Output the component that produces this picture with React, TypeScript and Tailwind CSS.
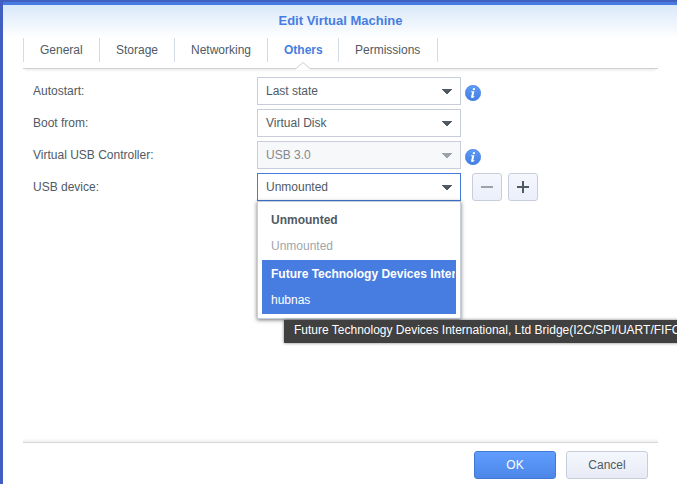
import React from "react";

const tabs = [
  { label: "General", width: "w-[76px]" },
  { label: "Storage", width: "w-[75px]" },
  { label: "Networking", width: "w-[93px]" },
  { label: "Others", width: "w-[71px]", active: true },
  { label: "Permissions", width: "w-[99px]" },
];

function InfoIcon() {
  return (
    <svg className="ml-1 mt-1 size-4 shrink-0" viewBox="0 0 16 16">
      <defs>
        <linearGradient id="info" x1="0" y1="0" x2="0" y2="1">
          <stop offset="0" stopColor="#5e9bf8" />
          <stop offset="1" stopColor="#437edf" />
        </linearGradient>
      </defs>
      <circle cx="8" cy="8" r="7.7" fill="url(#info)" stroke="#3f7bdb" strokeWidth="0.6" />
      <circle cx="8.9" cy="4.2" r="1.15" fill="#fff" />
      <path d="M6.2 6.3H9.4L8.2 11.4L9.5 11.1L9.3 12Q8.3 12.9 6.9 12.9Q5.8 12.8 6.1 11.4L7.2 7.2H6Z" fill="#fff" />
    </svg>
  );
}

function Select({ value, disabled, focused }: { value: string; disabled?: boolean; focused?: boolean }) {
  const tone = focused
    ? "border-[#457bde] bg-white text-[#505a64]"
    : disabled
      ? "border-[#c8cddb] bg-[#f7f8fa] text-[#83888e]"
      : "border-[#c8cddb] bg-white text-[#505a64]";
  return (
    <div className={"flex h-7 w-[204px] shrink-0 items-center justify-between border pl-2 pr-2 " + tone}>
      <span className="leading-[14px]">{value}</span>
      <svg className="h-[5px] w-[10px]" viewBox="0 0 10 5" shapeRendering="crispEdges">
        <path d="M0 0H10V1H9V2H8V3H7V4H6V5H4V4H3V3H2V2H1V1H0Z" fill={disabled ? "#9ca2ab" : "#505a64"} />
      </svg>
    </div>
  );
}

function Row({ label, children }: { label: string; children: React.ReactNode }) {
  return (
    <div className="flex h-7 items-center">
      <div className="w-[224px] shrink-0">{label}</div>
      {children}
    </div>
  );
}

function SquareButton({ plus }: { plus?: boolean }) {
  return (
    <button className="flex h-7 w-[30px] items-center justify-center rounded-[3px] border border-[#c8cddb] bg-linear-to-b from-[#f5f7fd] to-[#ebeffa]">
      <svg className="size-3" viewBox="0 0 12 12" shapeRendering="crispEdges">
        <path d={plus ? "M0 5H12V7H0ZM5 0H7V12H5Z" : "M0 5H12V7H0Z"} fill={plus ? "#505a64" : "#9ca2ab"} />
      </svg>
    </button>
  );
}

function DeviceMenu() {
  return (
    <div className="absolute left-0 top-full z-20 h-[118px] w-[204px] border border-[#c8cddb] bg-white p-1 shadow-[0_1px_4px_rgba(0,0,0,0.55)]">
      <div className="h-[54px] overflow-hidden whitespace-nowrap pl-[9px]">
        <div className="h-7 font-bold leading-7">Unmounted</div>
        <div className="-mt-px h-[26px] leading-[26px] text-[#a1a5aa]">Unmounted</div>
      </div>
      <div className="h-[54px] whitespace-nowrap bg-[#477de1] pl-[9px] pr-px text-white">
        <div className="h-7 overflow-hidden font-bold leading-7">Future Technology Devices International</div>
        <div className="-mt-px h-[26px] leading-[26px]">hubnas</div>
      </div>
    </div>
  );
}

export default function App() {
  return (
    <div className="h-[484px] w-[677px] overflow-hidden bg-[#415fc0] pl-[3px] pt-[2px] text-[12px] text-[#505a64] [font-family:'Liberation_Sans',Arial,sans-serif]">
      <div className="flex h-[482px] flex-col border-t-3 border-[#477be1] bg-white">
        <header className="flex h-[33px] shrink-0 items-start justify-center bg-linear-to-b from-[#d9e8f9] to-white pl-px pt-2">
          <h1 className="text-[13px] font-bold leading-[15px] text-[#477de1]">Edit Virtual Machine</h1>
        </header>

        <nav className="relative ml-5 mr-[19px] flex h-[31px] shrink-0 border-b border-[#d2d2d2] shadow-[0_3px_3px_-2px_rgba(0,0,0,0.1)]">
          {tabs.map((tab) => (
            <div
              key={tab.label}
              className={
                "h-6 shrink-0 border-l border-[#d5dae7] pl-4 leading-6 " +
                tab.width +
                (tab.active ? " font-bold text-[#477de1]" : "")
              }
            >
              {tab.label}
            </div>
          ))}
          <div className="h-6 w-px bg-[#d5dae7]" />
          <svg className="absolute left-[273px] top-6 h-[8px] w-[14px]" viewBox="0 0 14 8">
            <path d="M0 8V6.5L7 0L14 6.5V8Z" fill="#fff" />
            <path d="M0 6.5L7 .5L14 6.5" fill="none" stroke="#cfcfcf" />
          </svg>
        </nav>

        <main className="flex flex-1 flex-col gap-1 pl-[30px] pt-2">
          <Row label="Autostart:">
            <Select value="Last state" />
            <InfoIcon />
          </Row>
          <Row label="Boot from:">
            <Select value="Virtual Disk" />
          </Row>
          <Row label="Virtual USB Controller:">
            <Select value="USB 3.0" disabled />
            <InfoIcon />
          </Row>
          <Row label="USB device:">
            <div className="relative">
              <Select value="Unmounted" focused />
              <DeviceMenu />
              <div className="absolute left-[27px] top-[147px] z-30 h-[23px] w-[480px] whitespace-nowrap bg-[#404040] pl-[10px] leading-[20px] text-white shadow-[0_0_3px_rgba(0,0,0,0.5)]">
                Future Technology Devices International, Ltd Bridge(I2C/SPI/UART/FIFO)
              </div>
            </div>
            <div className="ml-[11px] flex gap-1.5">
              <SquareButton />
              <SquareButton plus />
            </div>
          </Row>
        </main>

        <footer className="ml-5 mr-[19px] h-[46px] shrink-0">
          <div className="h-[5px] border-b border-[#d6d6d6] bg-linear-to-b from-white to-[#f1f1f1]" />
          <div className="flex justify-end gap-2.5 pr-[10px] pt-2">
            <button className="h-7 w-[82px] rounded-[3px] border border-[#4178d6] bg-linear-to-b from-[#609dfd] to-[#4c87e8] text-white">OK</button>
            <button className="h-7 w-[82px] rounded-[3px] border border-[#c8cddb] bg-linear-to-b from-[#f5f7fd] to-[#e8ebf5]">Cancel</button>
          </div>
        </footer>
      </div>
    </div>
  );
}
